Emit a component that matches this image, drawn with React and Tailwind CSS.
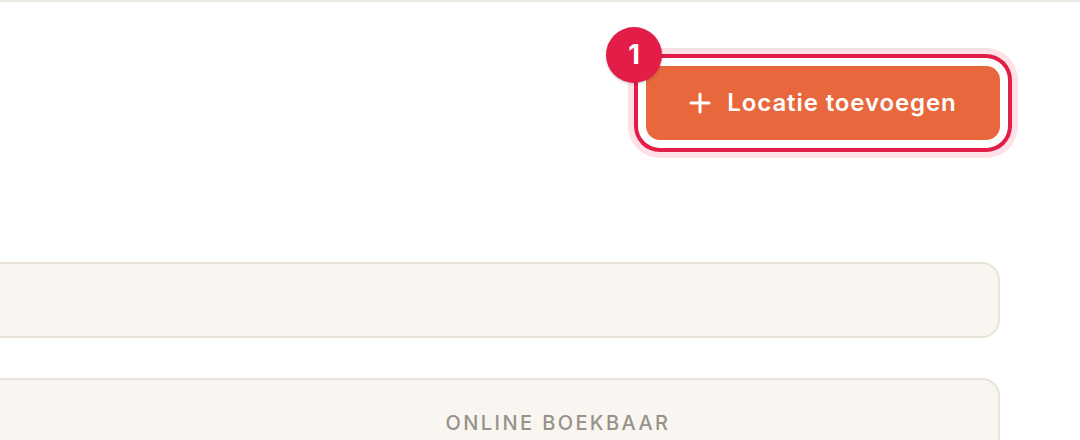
import React from "react";

export default function App() {
  return (
    <div
      className="w-[1080px] h-[440px] overflow-hidden bg-white border-t-2 border-[#ece7e1]"
      style={{ fontFamily: "Inter, 'Noto Sans', sans-serif" }}
    >
      <div className="flex justify-end pr-[80px] pt-[64px]">
        <div className="relative">
          <button className="flex items-center gap-[16px] h-[74px] w-[354px] justify-center rounded-[14px] bg-[#e8673c] text-white text-[24px] font-semibold tracking-[0.9px] shadow-[0_0_0_8px_#ffffff,0_0_0_12px_#e11d48,0_0_0_18px_#fde1e7]">
            <svg width="22" height="22" viewBox="0 0 22 22" fill="none" stroke="currentColor" strokeWidth="3" strokeLinecap="round">
              <path d="M11 2v18M2 11h18" />
            </svg>
            <span>Locatie toevoegen</span>
          </button>
          <div className="absolute left-[-40px] top-[-39px] w-[56px] h-[56px] rounded-full bg-[#e11d48] text-white text-[27px] font-bold flex items-center justify-center shadow-[0_1px_3px_rgba(0,0,0,0.2)]">
            1
          </div>
        </div>
      </div>

      <div className="flex flex-col gap-[40px] pt-[122px] ml-[-20px] w-[1020px]">
        <div className="h-[76px] rounded-[18px] border-2 border-[#e9e3da] bg-[#f9f6f1]" />
        <div className="h-[100px] rounded-[18px] border-2 border-[#e9e3da] bg-[#f9f6f1] flex pt-[28px]">
          <div className="w-[463px]" />
          <div className="w-[226px] flex justify-center text-[20px] font-medium tracking-[2.4px] text-[#97928a] whitespace-nowrap">
            ONLINE BOEKBAAR
          </div>
        </div>
      </div>
    </div>
  );
}
